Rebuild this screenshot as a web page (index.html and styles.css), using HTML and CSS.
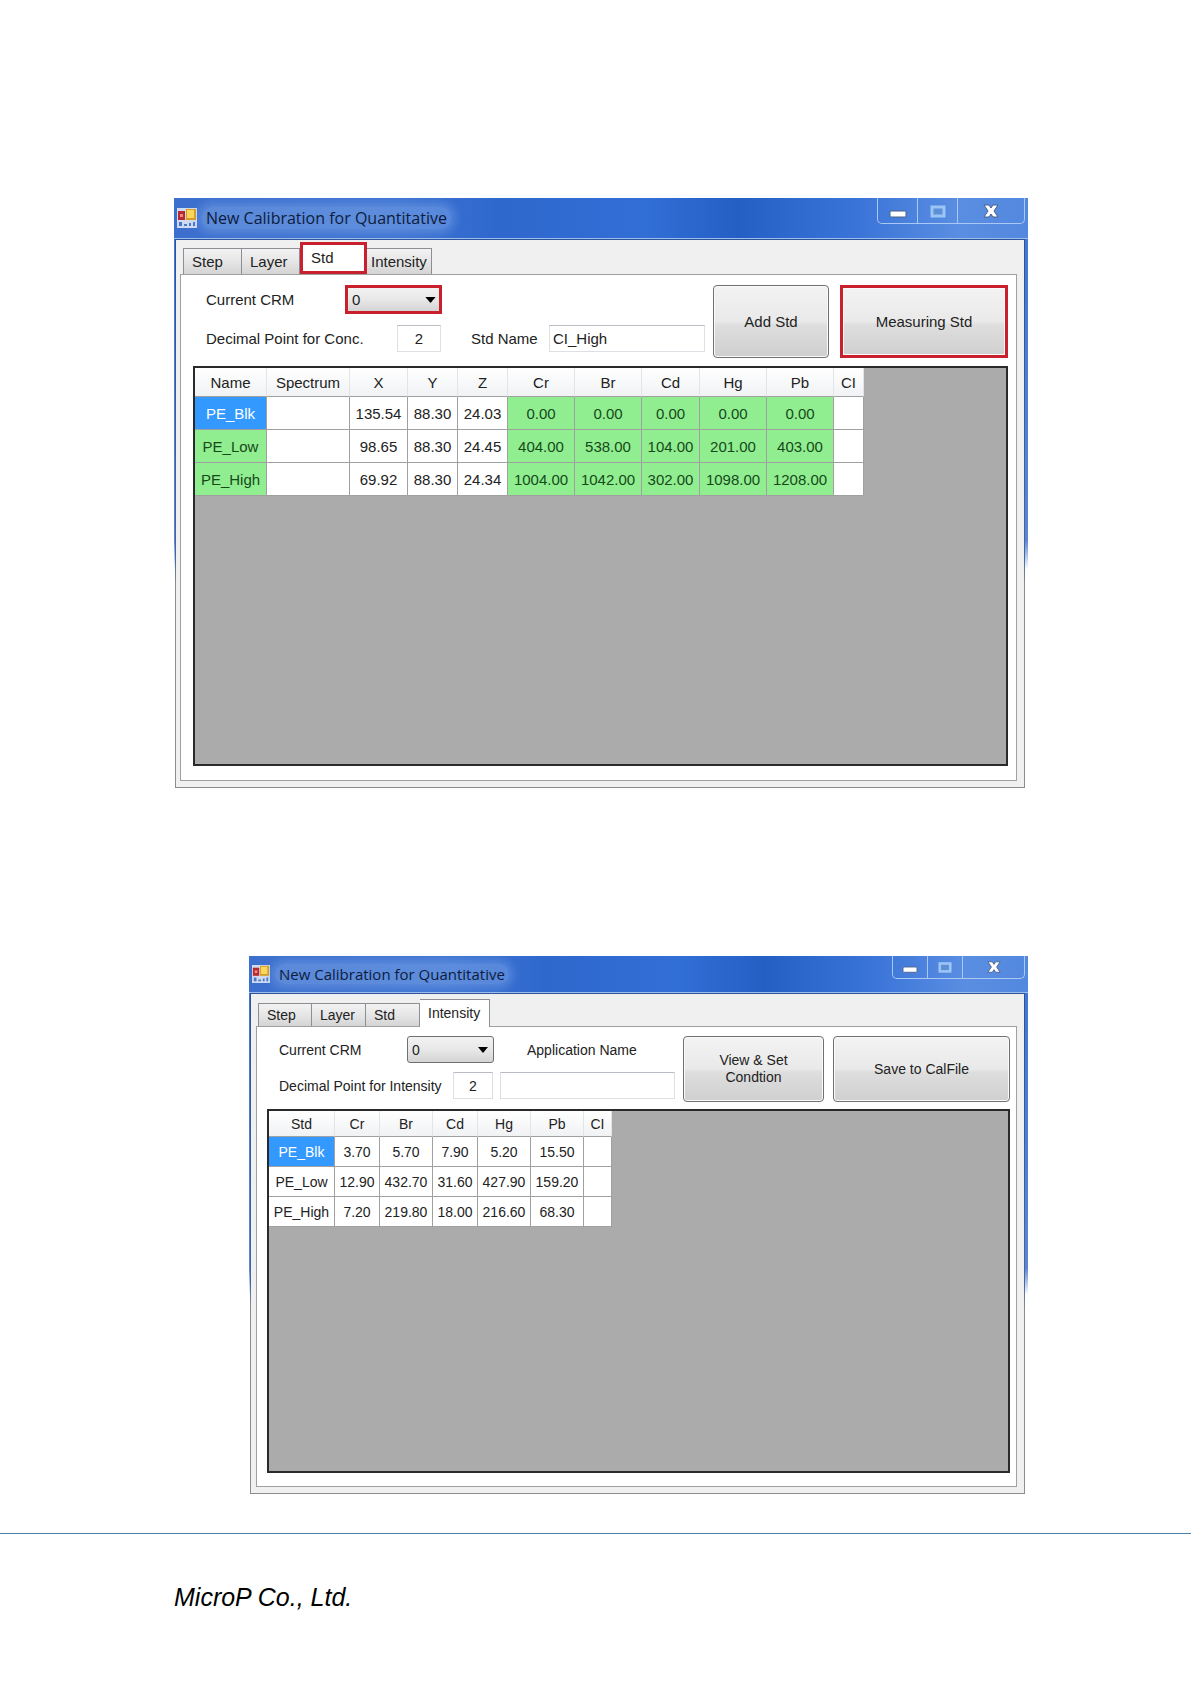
FILE: index.html
```
<!DOCTYPE html>
<html lang="en">
<head>
    <meta charset="UTF-8">
    <meta name="viewport" content="width=device-width, initial-scale=1.0">
    <title>New Calibration for Quantitative</title>
    <link rel="stylesheet" href="styles.css">
</head>
<body>
    <main>
        <!-- Std tab -->
        <section class="window">
            <header class="titlebar">
                <svg class="app-icon" viewBox="0 0 20 20">
                    <rect width="20" height="20" fill="#cfdaf0"/>
                    <rect x="1" y="3" width="7" height="9" fill="#b8282c"/>
                    <rect x="3" y="6" width="3" height="3" fill="#ee8a80"/>
                    <rect x="9" y="1" width="10" height="11" fill="#d99c1c"/>
                    <rect x="10" y="2" width="7" height="8" fill="#fbd75b"/>
                    <path d="M2 14h3v4H2zM7 16h3v2H7zM12 15h2v3h-2zM16 14h2v4h-2z" fill="#4a78c8"/>
                </svg>
                <h1><span>New Calibration for Quantitative</span></h1>
                <div class="controls">
                    <button type="button" aria-label="Minimize"><svg width="18" height="16" viewBox="0 0 18 16"><rect x="1" y="8" width="16" height="6" rx="1" fill="#fff" stroke="#49608c"/></svg></button>
                    <button type="button" aria-label="Maximize"><svg width="18" height="16" viewBox="0 0 18 16"><rect x="3" y="4" width="12" height="9" fill="#5c8fd6" stroke="#9cc4f5" stroke-width="3"/></svg></button>
                    <button type="button" aria-label="Close"><svg width="18" height="16" viewBox="0 0 18 16"><path d="M2 2h5l2 3 2-3h5l-4 6 4 6h-5l-2-3-2 3H2l4-6z" fill="#fff" stroke="#49608c"/></svg></button>
                </div>
            </header>
            <div class="frame">
                <div class="client">
                    <nav class="tabs">
                        <button type="button">Step</button>
                        <button type="button">Layer</button>
                        <button type="button" class="active marked">Std</button>
                        <button type="button">Intensity</button>
                    </nav>
                    <div class="panel">
                        <form class="toolbar">
                            <div class="fields">
                                <div class="row">
                                    <label class="crm-label" for="std-crm">Current CRM</label>
                                    <span class="dropdown marked">
                                        <select id="std-crm"><option>0</option></select>
                                        <svg width="11" height="6" viewBox="0 0 12 7"><path d="M0 0h12L6 7z"/></svg>
                                    </span>
                                </div>
                                <div class="row">
                                    <label class="decimal-label" for="std-decimal">Decimal Point for Conc.</label>
                                    <input class="decimal" id="std-decimal" type="text" value="2">
                                    <label class="name-label" for="std-name">Std Name</label>
                                    <input class="name" id="std-name" type="text" value="CI_High">
                                </div>
                            </div>
                            <button type="button" class="action">Add Std</button>
                            <button type="button" class="action wide marked">Measuring Std</button>
                        </form>
                        <div class="data-grid">
                            <table class="std-table">
                                <thead>
                                    <tr><th>Name</th><th>Spectrum</th><th>X</th><th>Y</th><th>Z</th><th>Cr</th><th>Br</th><th>Cd</th><th>Hg</th><th>Pb</th><th>CI</th></tr>
                                </thead>
                                <tbody>
                                    <tr><td class="selected">PE_Blk</td><td></td><td>135.54</td><td>88.30</td><td>24.03</td><td class="ok">0.00</td><td class="ok">0.00</td><td class="ok">0.00</td><td class="ok">0.00</td><td class="ok">0.00</td><td></td></tr>
                                    <tr><td class="ok">PE_Low</td><td></td><td>98.65</td><td>88.30</td><td>24.45</td><td class="ok">404.00</td><td class="ok">538.00</td><td class="ok">104.00</td><td class="ok">201.00</td><td class="ok">403.00</td><td></td></tr>
                                    <tr><td class="ok">PE_High</td><td></td><td>69.92</td><td>88.30</td><td>24.34</td><td class="ok">1004.00</td><td class="ok">1042.00</td><td class="ok">302.00</td><td class="ok">1098.00</td><td class="ok">1208.00</td><td></td></tr>
                                </tbody>
                            </table>
                        </div>
                    </div>
                </div>
            </div>
        </section>

        <!-- Intensity tab -->
        <section class="window small">
            <header class="titlebar">
                <svg class="app-icon" viewBox="0 0 20 20">
                    <rect width="20" height="20" fill="#cfdaf0"/>
                    <rect x="1" y="3" width="7" height="9" fill="#b8282c"/>
                    <rect x="3" y="6" width="3" height="3" fill="#ee8a80"/>
                    <rect x="9" y="1" width="10" height="11" fill="#d99c1c"/>
                    <rect x="10" y="2" width="7" height="8" fill="#fbd75b"/>
                    <path d="M2 14h3v4H2zM7 16h3v2H7zM12 15h2v3h-2zM16 14h2v4h-2z" fill="#4a78c8"/>
                </svg>
                <h1><span>New Calibration for Quantitative</span></h1>
                <div class="controls">
                    <button type="button" aria-label="Minimize"><svg width="16" height="14" viewBox="0 0 18 16"><rect x="1" y="8" width="16" height="6" rx="1" fill="#fff" stroke="#49608c"/></svg></button>
                    <button type="button" aria-label="Maximize"><svg width="16" height="14" viewBox="0 0 18 16"><rect x="3" y="4" width="12" height="9" fill="#5c8fd6" stroke="#9cc4f5" stroke-width="3"/></svg></button>
                    <button type="button" aria-label="Close"><svg width="16" height="14" viewBox="0 0 18 16"><path d="M2 2h5l2 3 2-3h5l-4 6 4 6h-5l-2-3-2 3H2l4-6z" fill="#fff" stroke="#49608c"/></svg></button>
                </div>
            </header>
            <div class="frame">
                <div class="client">
                    <nav class="tabs">
                        <button type="button">Step</button>
                        <button type="button">Layer</button>
                        <button type="button">Std</button>
                        <button type="button" class="active">Intensity</button>
                    </nav>
                    <div class="panel">
                        <form class="toolbar">
                            <div class="fields">
                                <div class="row">
                                    <label class="crm-label" for="int-crm">Current CRM</label>
                                    <span class="dropdown">
                                        <select id="int-crm"><option>0</option></select>
                                        <svg width="10" height="6" viewBox="0 0 12 7"><path d="M0 0h12L6 7z"/></svg>
                                    </span>
                                    <label class="app-label" for="int-app">Application Name</label>
                                </div>
                                <div class="row">
                                    <label class="decimal-label" for="int-decimal">Decimal Point for Intensity</label>
                                    <input class="decimal" id="int-decimal" type="text" value="2">
                                    <input class="name" id="int-app" type="text">
                                </div>
                            </div>
                            <button type="button" class="action">View &amp; Set<br>Condtion</button>
                            <button type="button" class="action wide">Save to CalFile</button>
                        </form>
                        <div class="data-grid">
                            <table class="intensity-table">
                                <thead>
                                    <tr><th>Std</th><th>Cr</th><th>Br</th><th>Cd</th><th>Hg</th><th>Pb</th><th>CI</th></tr>
                                </thead>
                                <tbody>
                                    <tr><td class="selected">PE_Blk</td><td>3.70</td><td>5.70</td><td>7.90</td><td>5.20</td><td>15.50</td><td></td></tr>
                                    <tr><td>PE_Low</td><td>12.90</td><td>432.70</td><td>31.60</td><td>427.90</td><td>159.20</td><td></td></tr>
                                    <tr><td>PE_High</td><td>7.20</td><td>219.80</td><td>18.00</td><td>216.60</td><td>68.30</td><td></td></tr>
                                </tbody>
                            </table>
                        </div>
                    </div>
                </div>
            </div>
        </section>
    </main>
    <footer>MicroP Co., Ltd.</footer>
</body>
</html>
```

FILE: styles.css
```
/* General Styles */
* {
    box-sizing: border-box;
}
body {
    font-family: "Liberation Sans", Arial, sans-serif;
    margin: 0;
    background-color: #fff;
    color: #222;
}
main {
    padding: 198px 163px 39px 174px;
}
button,
input,
select {
    font: inherit;
    color: inherit;
    margin: 0;
}
/* Window */
.window {
    font-size: 15px;
    padding: 0 3px 0 1px;
    background: linear-gradient(#3f74d2 0, #5b86d0 58%, #fff 63%);
}
.window.small {
    font-size: 14px;
    margin: 168px 0 0 75px;
}
.titlebar {
    display: flex;
    align-items: center;
    height: 41px;
    margin: 0 -3px 0 -1px;
    padding: 0 3px 0 3px;
    border-bottom: 1px solid #9dbdec;
    background: linear-gradient(90deg, #3c6fce 0, #3f74d2 25%, #2f68cd 38%, #316ed6 55%, #2460c4 66%, #3a74d8 80%, #5a8ee2 92%, #5288de 100%);
}
.small .titlebar {
    height: 37px;
}
.app-icon {
    width: 20px;
    height: 20px;
}
.small .app-icon {
    width: 18px;
    height: 18px;
}
.titlebar h1 {
    flex: 1;
    margin: 0 0 0 5px;
    font: 16px "Open Sans", "Noto Sans", sans-serif;
    color: #0d1c3c;
}
/* soft glow behind the caption */
.titlebar h1 span {
    padding: 0 4px;
    border-radius: 10px;
    background-color: rgba(150, 185, 240, 0.35);
    box-shadow: 0 0 10px 4px rgba(150, 185, 240, 0.35);
}
.small .titlebar h1 {
    font-size: 15px;
}
.controls {
    display: flex;
    align-self: flex-start;
    height: 26px;
    border: 1px solid #a9c8f4;
    border-top: none;
    border-radius: 0 0 5px 5px;
}
.small .controls {
    height: 23px;
}
.controls button {
    display: flex;
    align-items: center;
    justify-content: center;
    width: 40px;
    padding: 0;
    border: none;
    border-right: 1px solid #a9c8f4;
    background: none;
}
.controls button:last-child {
    width: 66px;
    border: none;
}
.small .controls button {
    width: 35px;
}
.small .controls button:last-child {
    width: 61px;
}
.frame {
    padding: 1px;
    background: linear-gradient(#2c549c 0, #4566a0 58%, #8c8c8c 63%);
}
.client {
    padding: 2px 7px 6px 4px;
    background-color: #f0f0f0;
}
.small .client {
    padding: 5px 7px 6px 5px;
}
/* Tabs */
.tabs {
    display: flex;
    align-items: flex-end;
    padding-left: 3px;
}
.small .tabs {
    padding-left: 2px;
}
.tabs button {
    width: 59px;
    height: 26px;
    padding: 0 0 0 8px;
    text-align: left;
    border: 1px solid #8c8e94;
    border-bottom: none;
    background: linear-gradient(#f2f2f2, #e6e6e6 50%, #d4d4d4);
}
.tabs button + button {
    width: 58px;
    border-left-width: 0;
}
.tabs button:last-child {
    width: 65px;
    padding-left: 4px;
}
.tabs button.active {
    width: 67px;
    height: 32px;
    padding: 0 0 2px 8px;
    background: #fff;
}
.tabs button.active.marked {
    border: 3px solid #c9202e;
}
.small .tabs button {
    width: 54px;
    height: 23px;
}
.small .tabs button.active {
    position: relative;
    width: 70px;
    height: 28px;
    margin-bottom: -1px;
}
.panel {
    padding: 10px 8px 14px 12px;
    border: 1px solid #a0a0a0;
    background-color: #fff;
}
.small .panel {
    padding: 9px 6px 13px 10px;
}
/* Toolbar */
.toolbar {
    display: flex;
    align-items: flex-start;
    margin-bottom: 8px;
}
.small .toolbar {
    margin-bottom: 7px;
}
.fields {
    flex: 1;
    min-width: 0;
    display: flex;
    flex-direction: column;
    gap: 11px;
    padding: 0 8px 0 13px;
}
.small .fields {
    gap: 9px;
    padding-left: 12px;
}
.row {
    display: flex;
    align-items: center;
}
.crm-label {
    width: 139px;
}
.decimal-label {
    width: 191px;
}
.small .crm-label {
    width: 128px;
}
.small .decimal-label {
    width: 174px;
}
.name-label {
    width: 78px;
    margin-left: 30px;
}
.app-label {
    margin-left: 33px;
}
.dropdown {
    display: grid;
    width: 97px;
    height: 29px;
}
.small .dropdown {
    width: 87px;
    height: 27px;
}
.dropdown select {
    grid-area: 1 / 1;
    appearance: none;
    padding: 0 4px;
    border: 1px solid #707070;
    border-radius: 3px;
    background: linear-gradient(#f2f2f2, #e8e8e8 50%, #d4d4d4);
}
.dropdown svg {
    grid-area: 1 / 1;
    place-self: center end;
    margin-right: 6px;
    pointer-events: none;
}
.dropdown.marked select,
.action.marked {
    border: 3px solid #c9202e;
    border-radius: 0;
}
input {
    height: 27px;
    padding: 0 3px;
    border: 1px solid #dcdfe4;
    border-top-color: #b8bcc4;
    background-color: #fff;
}
.decimal {
    width: 44px;
    text-align: center;
}
.small .decimal {
    width: 40px;
    margin-right: 7px;
}
.name {
    flex: 1;
    min-width: 0;
}
.action {
    flex: none;
    width: 116px;
    height: 73px;
    padding: 0;
    line-height: 17px;
    border: 1px solid #707070;
    border-radius: 4px;
    box-shadow: inset 0 0 0 1px #fafafa;
    background: linear-gradient(#f3f3f3, #e9e9e9 50%, #dedede 55%, #cfcfcf);
}
.action.wide {
    width: 168px;
    margin-left: 11px;
}
.small .action {
    width: 141px;
    height: 66px;
}
.small .action.wide {
    width: 177px;
    margin-left: 9px;
}
/* Data grid */
.data-grid {
    min-height: 400px;
    border: 2px solid #2a2a2a;
    background-color: #ababab;
}
.small .data-grid {
    min-height: 364px;
}
table {
    border-spacing: 0;
}
th,
td {
    height: 33px;
    padding: 0;
    text-align: center;
    border-right: 1px solid #a0a0a0;
    border-bottom: 1px solid #a0a0a0;
    background-color: #fff;
}
th {
    height: 29px;
    font-weight: normal;
    border-right-color: #e2e4e8;
    background: linear-gradient(#fff, #f1f2f4);
}
.small td {
    height: 30px;
}
.small th {
    height: 26px;
}
td.ok {
    color: #16491a;
    background-color: #90ee90;
}
td.selected {
    color: #fff;
    background-color: #3399ff;
}
.std-table th {
    width: 67px;
}
.std-table th:nth-child(1) {
    width: 72px;
}
.std-table th:nth-child(2) {
    width: 83px;
}
.std-table th:nth-child(3),
.std-table th:nth-child(8) {
    width: 58px;
}
.std-table th:nth-child(4),
.std-table th:nth-child(5) {
    width: 50px;
}
.std-table th:last-child {
    width: 30px;
}
.intensity-table th {
    width: 53px;
}
.intensity-table th:nth-child(1) {
    width: 66px;
}
.intensity-table th:nth-child(2),
.intensity-table th:nth-child(4) {
    width: 45px;
}
.intensity-table th:last-child {
    width: 28px;
}
/* Footer */
footer {
    padding: 49px 174px;
    border-top: 1px solid #4a7fa8;
    font-size: 25px;
    font-style: italic;
    color: #000;
}
```
